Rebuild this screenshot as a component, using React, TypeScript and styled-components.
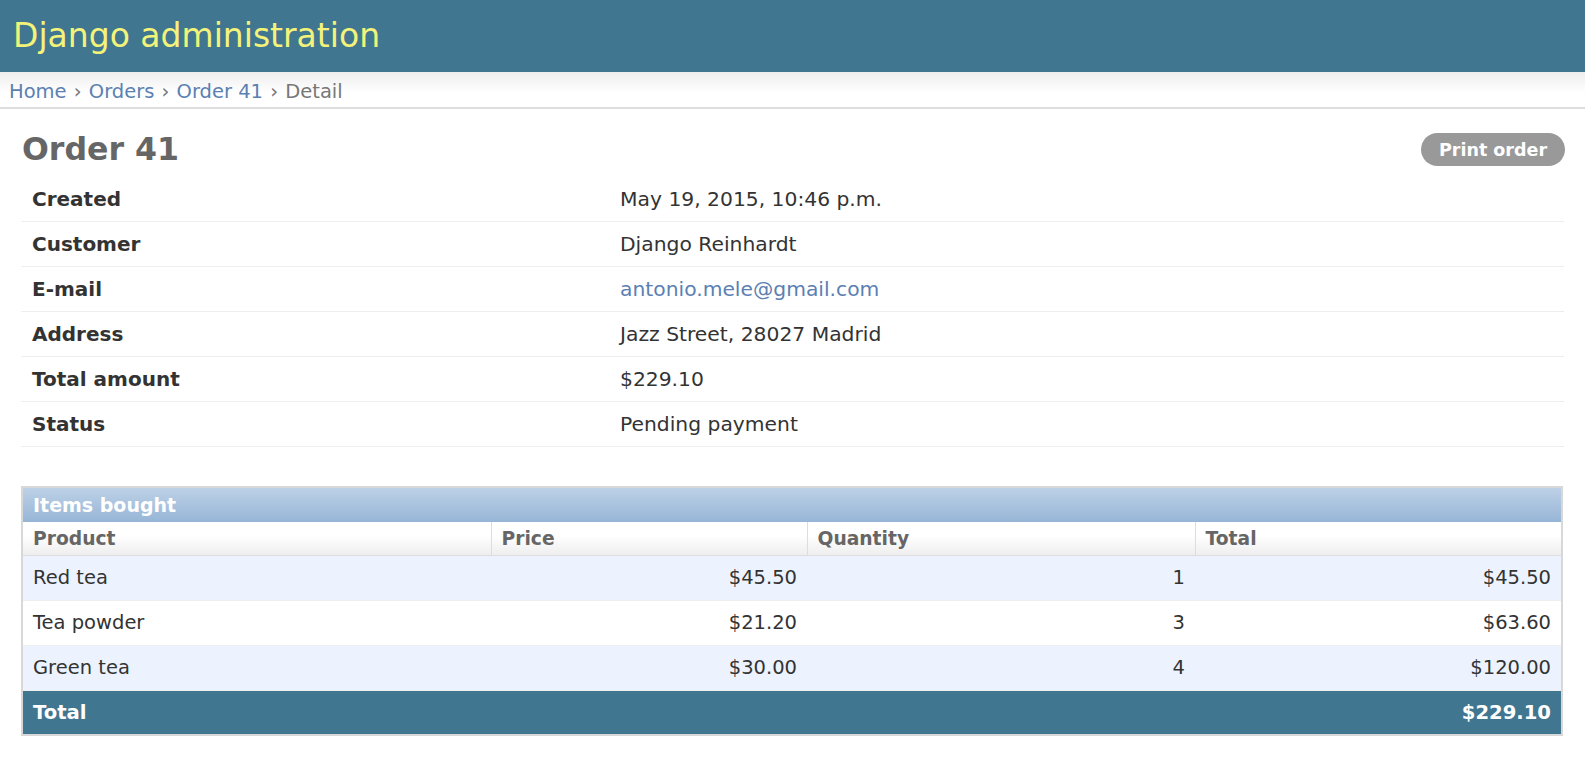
import React from "react";
import styled, { createGlobalStyle } from "styled-components";

const GlobalStyle = createGlobalStyle`
  html, body {
    margin: 0;
    padding: 0;
    background: #fff;
  }
  body {
    font-family: "DejaVu Sans", "Lucida Grande", Verdana, sans-serif;
    color: #333;
  }
  * { box-sizing: border-box; }
`;

const Header = styled.header`
  height: 72px;
  background: #417690;
  display: flex;
  align-items: center;
  padding: 0 13px;
`;

const Branding = styled.h1`
  margin: 0;
  font-size: 33px;
  font-weight: normal;
  color: #f4f379;
  line-height: 1;
  transform: translateY(-1px);
`;

const Breadcrumbs = styled.nav`
  height: 37px;
  padding: 4px 9px 0;
  display: flex;
  align-items: center;
  background: linear-gradient(#eeeeee, #fff 60%);
  border-bottom: 2px solid #dedede;
  font-size: 19.5px;
  color: #777;
  white-space: pre;
`;

const Crumb = styled.a`
  color: #5b80b2;
  text-decoration: none;
`;

const Sep = styled.span`
  color: #777;
  margin: 0 1px;
`;

const Content = styled.main`
  padding: 0 21px;
`;

const TitleRow = styled.div`
  display: flex;
  justify-content: space-between;
  align-items: flex-start;
  padding-top: 24px;
`;

const Title = styled.h1`
  margin: 0 0 0 1px;
  font-size: 31.6px;
  line-height: 33px;
  font-weight: bold;
  color: #666;
`;

const PrintButton = styled.a`
  height: 33px;
  width: 144px;
  border-radius: 17px;
  background: #999;
  color: #fff;
  font-size: 17.5px;
  font-weight: bold;
  display: flex;
  align-items: center;
  justify-content: center;
  text-decoration: none;
  margin-right: -1px;
`;

const InfoTable = styled.div`
  margin-top: 11px;
  display: grid;
  grid-template-columns: 588px 1fr;
`;

const InfoLabel = styled.div`
  height: 45px;
  padding: 0 11px;
  display: flex;
  align-items: center;
  border-bottom: 1px solid #eee;
  font-size: 20px;
  font-weight: bold;
  color: #333;
`;

const InfoValue = styled.div`
  height: 45px;
  padding: 0 11px;
  display: flex;
  align-items: center;
  border-bottom: 1px solid #eee;
  font-size: 20.3px;
  color: #333;
`;

const Link = styled.a`
  color: #5b80b2;
  text-decoration: none;
`;

const Module = styled.section`
  margin: 39px 1px 0 0;
  border: 2px solid #d8d8d8;
`;

const Caption = styled.div`
  height: 34px;
  padding: 0 10px;
  display: flex;
  align-items: center;
  background: linear-gradient(#bdd1e7, #96b5d6);
  color: #fff;
  font-size: 19px;
  font-weight: bold;
`;

const Table = styled.table`
  width: 100%;
  border-collapse: collapse;
  table-layout: fixed;
`;

const HeadCell = styled.th`
  height: 33px;
  padding: 0 10px;
  text-align: left;
  font-size: 18.7px;
  font-weight: bold;
  color: #666;
  background: linear-gradient(#fff 40%, #eee);
  border-bottom: 1px solid #ddd;
  border-left: 1px solid #ddd;
  &:first-child { border-left: none; }
`;

const Row = styled.tr<{ $alt: boolean }>`
  background: ${(p) => (p.$alt ? "#edf3fe" : "#fff")};
`;

const Cell = styled.td<{ $num?: boolean }>`
  height: 45px;
  padding: 0 10px;
  font-size: 19.5px;
  color: #333;
  text-align: ${(p) => (p.$num ? "right" : "left")};
  border-bottom: 1px solid #eee;
`;

const TotalRow = styled.tr`
  background: #417690;
`;

const TotalCell = styled.td<{ $num?: boolean }>`
  height: 44px;
  padding: 0 10px;
  font-size: 19.6px;
  font-weight: bold;
  color: #fff;
  text-align: ${(p) => (p.$num ? "right" : "left")};
`;

const info: [string, React.ReactNode][] = [
  ["Created", "May 19, 2015, 10:46 p.m."],
  ["Customer", "Django Reinhardt"],
  ["E-mail", <Link href="#">antonio.mele@gmail.com</Link>],
  ["Address", "Jazz Street, 28027 Madrid"],
  ["Total amount", "$229.10"],
  ["Status", "Pending payment"],
];

const items = [
  { product: "Red tea", price: "$45.50", qty: 1, total: "$45.50" },
  { product: "Tea powder", price: "$21.20", qty: 3, total: "$63.60" },
  { product: "Green tea", price: "$30.00", qty: 4, total: "$120.00" },
];

export default function App() {
  return (
    <>
      <GlobalStyle />
      <Header>
        <Branding>Django administration</Branding>
      </Header>
      <Breadcrumbs>
        <Crumb href="#">Home</Crumb>
        <Sep> › </Sep>
        <Crumb href="#">Orders</Crumb>
        <Sep> › </Sep>
        <Crumb href="#">Order 41</Crumb>
        <Sep> › </Sep>
        Detail
      </Breadcrumbs>
      <Content>
        <TitleRow>
          <Title>Order 41</Title>
          <PrintButton href="#">Print order</PrintButton>
        </TitleRow>
        <InfoTable>
          {info.map(([label, value]) => (
            <React.Fragment key={label}>
              <InfoLabel>{label}</InfoLabel>
              <InfoValue>{value}</InfoValue>
            </React.Fragment>
          ))}
        </InfoTable>
        <Module>
          <Caption>Items bought</Caption>
          <Table>
            <colgroup>
              <col style={{ width: 468 }} />
              <col style={{ width: 316 }} />
              <col style={{ width: 388 }} />
              <col />
            </colgroup>
            <thead>
              <tr>
                <HeadCell>Product</HeadCell>
                <HeadCell>Price</HeadCell>
                <HeadCell>Quantity</HeadCell>
                <HeadCell>Total</HeadCell>
              </tr>
            </thead>
            <tbody>
              {items.map((it, i) => (
                <Row key={it.product} $alt={i % 2 === 0}>
                  <Cell>{it.product}</Cell>
                  <Cell $num>{it.price}</Cell>
                  <Cell $num>{it.qty}</Cell>
                  <Cell $num>{it.total}</Cell>
                </Row>
              ))}
              <TotalRow>
                <TotalCell>Total</TotalCell>
                <TotalCell colSpan={2} />
                <TotalCell $num>$229.10</TotalCell>
              </TotalRow>
            </tbody>
          </Table>
        </Module>
      </Content>
    </>
  );
}
